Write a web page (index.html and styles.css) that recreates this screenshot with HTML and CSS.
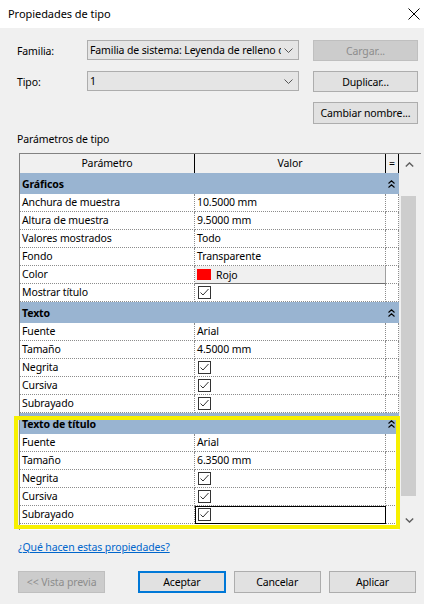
FILE: index.html
```html
<!DOCTYPE html>
<html lang="es">
<head>
<meta charset="utf-8">
<title>Propiedades de tipo</title>
<link rel="stylesheet" href="styles.css">
</head>
<body>
<div class="window">
  <header class="titlebar">
    <span class="title">Propiedades de tipo</span>
    <svg class="close" width="12" height="12" viewBox="0 0 12 12"><path d="M0.5 0.5L11.5 11.5M11.5 0.5L0.5 11.5" stroke="#000" stroke-width="1" fill="none"/></svg>
  </header>
  <main class="content">
    <div class="form">
      <span class="lbl">Familia:</span>
      <div class="combo"><span class="combo-text">Familia de sistema: Leyenda de relleno de color</span><svg class="combo-arrow" width="9" height="5" viewBox="0 0 9 5"><path d="M0.5 0.5L4.5 4.5L8.5 0.5" stroke="#555" fill="none"/></svg></div>
      <button class="btn disabled">Cargar...</button>
      <span class="lbl">Tipo:</span>
      <div class="combo"><span class="combo-text">1</span><svg class="combo-arrow" width="9" height="5" viewBox="0 0 9 5"><path d="M0.5 0.5L4.5 4.5L8.5 0.5" stroke="#555" fill="none"/></svg></div>
      <button class="btn">Duplicar...</button>
      <button class="btn rename">Cambiar nombre...</button>
    </div>

    <div class="section-label">Parámetros de tipo</div>

    <div class="frame">
      <div class="ptable">
        <div class="thead">
          <div class="th c1">Parámetro</div>
          <div class="th c2">Valor</div>
          <div class="th c3">=</div>
        </div>

        <div class="group"><span>Gráficos</span><svg class="collapse" width="7" height="8" viewBox="0 0 7 8"><path d="M0.5 3.5L3.5 0.8L6.5 3.5M0.5 7.5L3.5 4.8L6.5 7.5" stroke="#000" stroke-width="1.1" fill="none"/></svg></div>
        <div class="row"><div class="cell c1">Anchura de muestra</div><div class="cell c2">10.5000 mm</div><div class="cell c3"></div></div>
        <div class="row"><div class="cell c1">Altura de muestra</div><div class="cell c2">9.5000 mm</div><div class="cell c3"></div></div>
        <div class="row"><div class="cell c1">Valores mostrados</div><div class="cell c2">Todo</div><div class="cell c3"></div></div>
        <div class="row"><div class="cell c1">Fondo</div><div class="cell c2">Transparente</div><div class="cell c3"></div></div>
        <div class="row"><div class="cell c1">Color</div><div class="cell c2 color-cell"><span class="swatch"></span><span>Rojo</span></div><div class="cell c3"></div></div>
        <div class="row"><div class="cell c1">Mostrar título</div><div class="cell c2"><span class="check"><svg width="11" height="11" viewBox="0 0 11 11"><path d="M1.5 5.5L4 8L9.5 2" stroke="#333" stroke-width="1" fill="none"/></svg></span></div><div class="cell c3"></div></div>

        <div class="group"><span>Texto</span><svg class="collapse" width="7" height="8" viewBox="0 0 7 8"><path d="M0.5 3.5L3.5 0.8L6.5 3.5M0.5 7.5L3.5 4.8L6.5 7.5" stroke="#000" stroke-width="1.1" fill="none"/></svg></div>
        <div class="row"><div class="cell c1">Fuente</div><div class="cell c2">Arial</div><div class="cell c3"></div></div>
        <div class="row"><div class="cell c1">Tamaño</div><div class="cell c2">4.5000 mm</div><div class="cell c3"></div></div>
        <div class="row"><div class="cell c1">Negrita</div><div class="cell c2"><span class="check"><svg width="11" height="11" viewBox="0 0 11 11"><path d="M1.5 5.5L4 8L9.5 2" stroke="#333" stroke-width="1" fill="none"/></svg></span></div><div class="cell c3"></div></div>
        <div class="row"><div class="cell c1">Cursiva</div><div class="cell c2"><span class="check"><svg width="11" height="11" viewBox="0 0 11 11"><path d="M1.5 5.5L4 8L9.5 2" stroke="#333" stroke-width="1" fill="none"/></svg></span></div><div class="cell c3"></div></div>
        <div class="row"><div class="cell c1">Subrayado</div><div class="cell c2"><span class="check"><svg width="11" height="11" viewBox="0 0 11 11"><path d="M1.5 5.5L4 8L9.5 2" stroke="#333" stroke-width="1" fill="none"/></svg></span></div><div class="cell c3"></div></div>

        <div class="group"><span>Texto de título</span><svg class="collapse" width="7" height="8" viewBox="0 0 7 8"><path d="M0.5 3.5L3.5 0.8L6.5 3.5M0.5 7.5L3.5 4.8L6.5 7.5" stroke="#000" stroke-width="1.1" fill="none"/></svg></div>
        <div class="row"><div class="cell c1">Fuente</div><div class="cell c2">Arial</div><div class="cell c3"></div></div>
        <div class="row"><div class="cell c1">Tamaño</div><div class="cell c2">6.3500 mm</div><div class="cell c3"></div></div>
        <div class="row"><div class="cell c1">Negrita</div><div class="cell c2"><span class="check"><svg width="11" height="11" viewBox="0 0 11 11"><path d="M1.5 5.5L4 8L9.5 2" stroke="#333" stroke-width="1" fill="none"/></svg></span></div><div class="cell c3"></div></div>
        <div class="row"><div class="cell c1">Cursiva</div><div class="cell c2"><span class="check"><svg width="11" height="11" viewBox="0 0 11 11"><path d="M1.5 5.5L4 8L9.5 2" stroke="#333" stroke-width="1" fill="none"/></svg></span></div><div class="cell c3"></div></div>
        <div class="row"><div class="cell c1">Subrayado</div><div class="cell c2 selected"><span class="check"><svg width="11" height="11" viewBox="0 0 11 11"><path d="M1.5 5.5L4 8L9.5 2" stroke="#333" stroke-width="1" fill="none"/></svg></span></div><div class="cell c3"></div></div>
      </div>

      <div class="scrollbar">
        <div class="sb-btn"><svg width="9" height="5" viewBox="0 0 9 5"><path d="M0.8 4.5L4.5 0.9L8.2 4.5" stroke="#606060" stroke-width="1.4" fill="none"/></svg></div>
        <div class="sb-track"><div class="sb-thumb"></div></div>
        <div class="sb-btn"><svg width="9" height="5" viewBox="0 0 9 5"><path d="M0.8 0.5L4.5 4.1L8.2 0.5" stroke="#606060" stroke-width="1.4" fill="none"/></svg></div>
      </div>
    </div>

    <a class="help" href="#">¿Qué hacen estas propiedades?</a>

    <div class="actions">
      <button class="btn wide disabled">&lt;&lt; Vista previa</button>
      <button class="btn wide default">Aceptar</button>
      <button class="btn wide">Cancelar</button>
      <button class="btn wide">Aplicar</button>
    </div>
  </main>
  <div class="highlight"></div>
</div>
</body>
</html>
```

FILE: styles.css
```css
* { box-sizing: border-box; }
html, body { margin: 0; padding: 0; }
body {
  width: 424px;
  height: 604px;
  overflow: hidden;
  background: #f0f0f0;
  font-family: "Noto Sans", "Open Sans", sans-serif;
  font-size: 10.5px;
  letter-spacing: -0.12px;
  color: #000;
}
.window { position: relative; width: 424px; height: 604px; }

.titlebar {
  height: 28px;
  background: #fff;
  display: flex;
  align-items: center;
  justify-content: space-between;
  padding: 0 4px 2px 8px;
}
.title { font-size: 11px; letter-spacing: -0.05px; }
.close { display: block; margin-top: 1px; }

.content { padding: 12px 0 0 17px; }

.form {
  display: grid;
  grid-template-columns: 56px 212px 105px;
  grid-template-rows: 21px 21px 22px;
  column-gap: 14px;
  row-gap: 10px;
  align-items: center;
}
.lbl { line-height: 16px; }
.combo {
  align-self: start;
  height: 20px;
  background: #e5e5e5;
  border: 1px solid #adadad;
  display: flex;
  align-items: center;
  padding: 0 5px 0 2px;
}
.combo-text {
  flex: 1;
  white-space: nowrap;
  overflow: hidden;
  line-height: 16px;
  margin-right: 3px;
}
.combo-arrow { display: block; flex: none; }

.btn {
  font-family: inherit;
  font-size: 10.5px;
  letter-spacing: -0.12px;
  color: #000;
  background: #e1e1e1;
  border: 1px solid #adadad;
  height: 21px;
  padding: 0;
  margin: 0;
}
.btn.disabled { background: #cccccc; border-color: #bfbfbf; color: #8d8d8d; }
.rename { grid-column: 3; height: 22px; }

.section-label { margin-top: 7px; line-height: 16px; }

.frame {
  margin: 6px 0 0 2px;
  width: 402px;
  height: 377px;
  border-top: 1px solid #828282;
  border-left: 1px solid #828282;
  display: flex;
}
.ptable {
  width: 379px;
  background: #fff;
  display: flex;
  flex-direction: column;
}
.thead { display: flex; height: 19px; background: #f0f0f0; }
.th {
  text-align: center;
  line-height: 18px;
  border-right: 1px solid #000;
}
.c1 { width: 175px; flex: none; }
.c2 { width: 191px; flex: none; }
.c3 { width: 13px; flex: none; }

.group {
  height: 21px;
  background: #99b4d1;
  font-weight: bold;
  display: flex;
  align-items: center;
  justify-content: space-between;
  padding: 0 4px 0 2px;
}
.collapse { display: block; }

.row { display: flex; height: 18px; }
.cell {
  border-right: 1px dotted #8c8c8c;
  border-bottom: 1px dotted #8c8c8c;
  padding-left: 2px;
  line-height: 16px;
  white-space: nowrap;
  overflow: hidden;
}
.color-cell {
  display: flex;
  align-items: center;
  gap: 5px;
  background: #f0f0f0;
  border-right: 1px solid #a0a0a0;
  border-bottom: 1px solid #6d6d6d;
}
.swatch { width: 14px; height: 11px; background: #ff0000; flex: none; }
.check {
  display: block;
  width: 13px;
  height: 13px;
  margin: 2px 0 0 1px;
  border: 1px solid #333;
  background: #fff;
}
.check svg { display: block; }
.selected { outline: 1px solid #000; outline-offset: -1px; }

.scrollbar {
  width: 20px;
  display: flex;
  flex-direction: column;
  background: #f0f0f0;
}
.sb-btn {
  height: 20px;
  display: flex;
  align-items: center;
  justify-content: center;
}
.sb-btn svg { display: block; }
.sb-track { flex: 1; padding: 22px 0 0 2px; }
.sb-thumb { width: 15px; height: 300px; background: #cdcdcd; }

.help {
  display: inline-block;
  margin: 9px 0 0 1px;
  line-height: 16px;
  color: #0066cc;
  text-decoration: underline;
}

.actions {
  display: flex;
  margin: 16px 0 0 1px;
}
.btn.wide { width: 88px; height: 22px; margin-right: 8px; }
.btn.wide:first-child { margin-right: 33px; }
.btn.default { border: 2px solid #0078d7; }

.highlight {
  position: absolute;
  left: 14px;
  top: 416px;
  width: 386px;
  height: 113px;
  border: 4px solid #f7f000;
  pointer-events: none;
}
```
